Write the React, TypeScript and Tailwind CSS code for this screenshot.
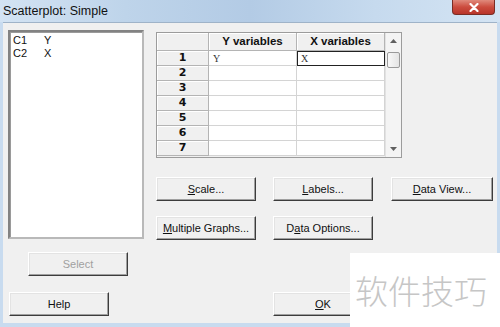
import React from 'react';

function Btn({ children, className = '', disabled = false }: { children: React.ReactNode; className?: string; disabled?: boolean }) {
    return (
        <div
            className={`h-[24px] w-[100px] flex items-center justify-center bg-[#f0f0f0] border border-t-white border-l-white border-r-[#3c3c3c] border-b-[#3c3c3c] shadow-[inset_-1px_-1px_0_#a0a0a0,inset_1px_1px_0_#e3e3e3] text-[11px] ${disabled ? 'text-[#a0a0a0]' : 'text-[#111]'} ${className}`}
        >
            {children}
        </div>
    );
}

const rows = [1, 2, 3, 4, 5, 6, 7];

export default function App() {
    return (
        <div className="w-[500px] h-[327px] relative overflow-hidden bg-[#c8dbef] flex flex-col font-['Liberation_Sans',Arial,sans-serif]">
            {/* Title bar */}
            <div className="h-[22px] flex items-start justify-between bg-[linear-gradient(90deg,#d3e3f3_0%,#bed4ea_25%,#b3cbe5_50%,#c6daee_75%,#d4e4f3_100%)]">
                <span className="pl-[3px] pt-[3px] text-[12.5px] text-[#111] leading-[16px]">Scatterplot: Simple</span>
                <div className="mr-[5px] w-[43px] h-[15px] rounded-b-[4px] border border-t-0 border-[#7a2d24] bg-[linear-gradient(180deg,#e08a7c_0%,#cc4c3e_50%,#b8352a_100%)] flex items-center justify-center">
                    <svg width="10" height="9" viewBox="0 0 10 9">
                        <path d="M1.5 1 L8.5 8 M8.5 1 L1.5 8" stroke="#fff" strokeWidth="2.2" strokeLinecap="round" />
                    </svg>
                </div>
            </div>

            {/* Client area */}
            <div className="flex-1 mx-[3px] mb-[4px] bg-[#f0f0f0] border-t border-[#9fb3c8] pt-[7px] pl-[5px] flex flex-col">
                <div className="flex gap-[12px]">
                    {/* Left: column list */}
                    <div className="w-[136px] flex flex-col">
                        <div className="h-[209px] bg-white border-2 border-t-[#828282] border-l-[#828282] border-r-[#b9b9b9] border-b-[#b9b9b9] shadow-[inset_1px_1px_0_#9a9a9a] pt-[2px] pl-[3px] text-[11px] text-[#111] leading-[13px]">
                            <div className="flex"><span className="w-[31px]">C1</span><span>Y</span></div>
                            <div className="flex"><span className="w-[31px]">C2</span><span>X</span></div>
                        </div>
                        <Btn disabled className="mt-[13px] ml-[20px]">Select</Btn>
                    </div>

                    {/* Right: variable grid + buttons */}
                    <div className="flex flex-col">
                        <div className="mt-[2px] w-[246px] h-[126px] border border-[#9c9c9c] flex bg-[#f0f0f0]">
                            <div className="flex flex-col">
                                <div className="flex h-[18px] text-[11.5px] font-bold text-[#111]">
                                    <div className="w-[52px] border-r border-b border-[#b4b4b4] shadow-[inset_1px_1px_0_#fff]" />
                                    <div className="w-[88px] border-r border-b border-[#b4b4b4] shadow-[inset_1px_1px_0_#fff] flex items-center justify-center">Y variables</div>
                                    <div className="w-[88px] border-r border-b border-[#b4b4b4] shadow-[inset_1px_1px_0_#fff] flex items-center justify-center">X variables</div>
                                </div>
                                {rows.map((r) => (
                                    <div key={r} className="flex h-[15px]">
                                        <div className="w-[52px] border-r border-b border-[#b4b4b4] shadow-[inset_1px_1px_0_#fff] flex items-center justify-center text-[11px] font-bold text-[#111] font-['DejaVu_Sans',sans-serif]">
                                            {r}
                                        </div>
                                        <div className="w-[88px] bg-white border-r border-b border-[#d4d4d4] flex items-center pl-[4px] text-[10px] text-[#333] font-['Liberation_Serif',serif]">
                                            {r === 1 ? 'Y' : ''}
                                        </div>
                                        <div className={`w-[88px] bg-white border-b flex items-center pl-[3px] text-[10px] text-[#333] font-['Liberation_Serif',serif] ${r === 1 ? 'border border-[#222]' : 'border-r border-[#d4d4d4]'}`}>
                                            {r === 1 ? 'X' : ''}
                                        </div>
                                    </div>
                                ))}
                            </div>
                            {/* Scrollbar */}
                            <div className="w-[16px] flex flex-col items-center bg-[#f4f4f4] border-l border-[#e2e2e2]">
                                <div className="h-[16px] flex items-center justify-center">
                                    <svg width="7" height="4" viewBox="0 0 7 4"><path d="M0 4 L3.5 0 L7 4 Z" fill="#606060" /></svg>
                                </div>
                                <div className="mt-[3px] w-[13px] h-[16px] rounded-[2px] border border-[#9a9a9a] bg-[linear-gradient(90deg,#f8f8f8,#e4e4e4)]" />
                                <div className="flex-1" />
                                <div className="h-[16px] flex items-center justify-center">
                                    <svg width="7" height="4" viewBox="0 0 7 4"><path d="M0 0 L3.5 4 L7 0 Z" fill="#606060" /></svg>
                                </div>
                            </div>
                        </div>

                        <div className="mt-[19px] flex gap-[17px]">
                            <Btn><span><span className="underline">S</span>cale...</span></Btn>
                            <Btn><span><span className="underline">L</span>abels...</span></Btn>
                            <Btn className="ml-[1px] w-[102px]"><span><span className="underline">D</span>ata View...</span></Btn>
                        </div>
                        <div className="mt-[15px] flex gap-[17px]">
                            <Btn><span><span className="underline">M</span>ultiple Graphs...</span></Btn>
                            <Btn><span>D<span className="underline">a</span>ta Options...</span></Btn>
                        </div>
                    </div>
                </div>

                <div className="mt-[16px] flex">
                    <Btn className="ml-[1px]">Help</Btn>
                    <Btn className="ml-[164px]"><span><span className="underline">O</span>K</span></Btn>
                </div>
            </div>

            {/* Watermark overlay */}
            <div className="absolute left-[350px] top-[253px] w-[150px] h-[74px] bg-white flex items-center pl-[5px]">
                <span className="text-[33px] leading-none text-[#c6c6c6] font-['Noto_Sans_CJK_SC',sans-serif] font-light">软件技巧</span>
            </div>
        </div>
    );
}
